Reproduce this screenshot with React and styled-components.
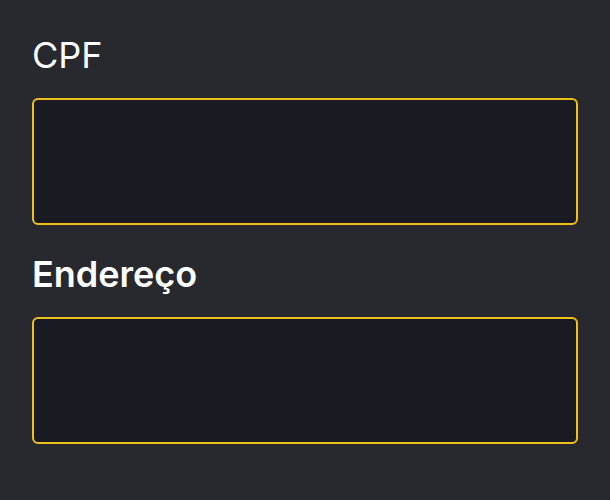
import React from "react";
import styled, { createGlobalStyle } from "styled-components";

const GlobalStyle = createGlobalStyle`
  html, body {
    margin: 0;
    padding: 0;
    background: #28282f;
    font-family: Inter, "Noto Sans", sans-serif;
  }
`;

const Page = styled.div`
  width: 610px;
  height: 500px;
  box-sizing: border-box;
  padding: 33px 32px;
  display: flex;
  flex-direction: column;
  gap: 27px;
  background: #28282f;
`;

const Field = styled.div`
  display: flex;
  flex-direction: column;
  gap: 21px;
`;

const Label = styled.label`
  color: #ffffff;
  font-size: 36px;
  line-height: 44px;
  font-weight: ${(p) => (p.$bold ? 600 : 400)};
`;

const Input = styled.input`
  box-sizing: border-box;
  width: 100%;
  height: 127px;
  background: #1a1a22;
  border: 2px solid #f0bf1a;
  border-radius: 6px;
  outline: none;
  color: #fff;
  font-size: 20px;
  padding: 0 16px;
`;

export default function App() {
  return (
    <>
      <GlobalStyle />
      <Page>
        <Field>
          <Label>CPF</Label>
          <Input />
        </Field>
        <Field>
          <Label $bold>Endereço</Label>
          <Input />
        </Field>
      </Page>
    </>
  );
}
